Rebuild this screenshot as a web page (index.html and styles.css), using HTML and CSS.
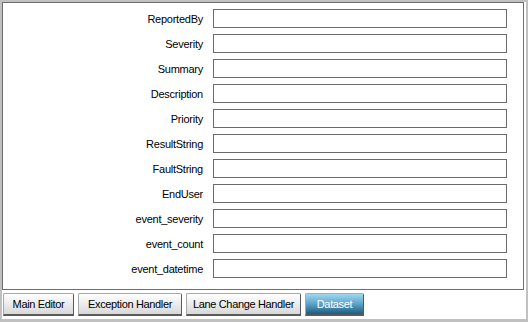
FILE: index.html
```html
<!DOCTYPE html>
<html lang="en">
  <head>
    <meta charset="UTF-8" />
    <title>Dataset</title>
    <link rel="stylesheet" href="styles.css">
  </head>
  <body>
    <div class="frame">
      <div class="panel">
        <div class="field"><label>ReportedBy</label><input type="text" /></div>
        <div class="field"><label>Severity</label><input type="text" /></div>
        <div class="field"><label>Summary</label><input type="text" /></div>
        <div class="field"><label>Description</label><input type="text" /></div>
        <div class="field"><label>Priority</label><input type="text" /></div>
        <div class="field"><label>ResultString</label><input type="text" /></div>
        <div class="field"><label>FaultString</label><input type="text" /></div>
        <div class="field"><label>EndUser</label><input type="text" /></div>
        <div class="field"><label>event_severity</label><input type="text" /></div>
        <div class="field"><label>event_count</label><input type="text" /></div>
        <div class="field"><label>event_datetime</label><input type="text" /></div>
      </div>

      <div class="tabs">
        <div class="tab tab-main">Main Editor</div>
        <div class="tab tab-exception">Exception Handler</div>
        <div class="tab tab-lane">Lane Change Handler</div>
        <div class="tab tab-dataset active">Dataset</div>
      </div>
    </div>
  </body>
</html>
```

FILE: styles.css
```css
* {
  margin: 0;
  padding: 0;
  box-sizing: border-box;
}

body {
  font-family: "Liberation Sans", Arial, sans-serif;
  font-size: 11px;
  background: #c0c0c0;
  width: 528px;
  height: 322px;
  padding: 2px 2px 3px 2px;
}

.frame {
  background: white;
  height: 317px;
}

.panel {
  border: 1px solid #6e6e6e;
  margin-right: 2px;
  height: 288px;
  padding-top: 6px;
}

.field {
  display: flex;
  align-items: center;
  height: 25px;
  padding-bottom: 6px;
}

.field label {
  width: 200px;
  text-align: right;
  margin-right: 10px;
  letter-spacing: -0.25px;
  color: #000;
}

.field input {
  width: 294px;
  height: 19px;
  border: 1px solid #6b6b6b;
  background: white;
  font-family: inherit;
  font-size: 11px;
}

.tabs {
  display: flex;
  gap: 4px;
  padding: 3px 0 0 1px;
}

.tab {
  height: 23px;
  display: flex;
  align-items: center;
  justify-content: center;
  letter-spacing: -0.35px;
  background: linear-gradient(#ffffff, #d8d8d8);
  border: 1px solid #a8a8a8;
  border-right-color: #5a5a5a;
  border-bottom: 2px solid #5a5a5a;
  border-radius: 2px 2px 0 0;
  color: #000;
}

.tab-main {
  width: 71px;
}

.tab-exception {
  width: 104px;
}

.tab-lane {
  width: 115px;
}

.tab-dataset {
  width: 59px;
}

.tab.active {
  background: linear-gradient(#9fd8f2, #62a9cd 45%, #1f5c7f);
  border-color: #7fb8d6;
  border-right-color: #5a5a5a;
  border-bottom-color: #5a5a5a;
  color: white;
}
```
